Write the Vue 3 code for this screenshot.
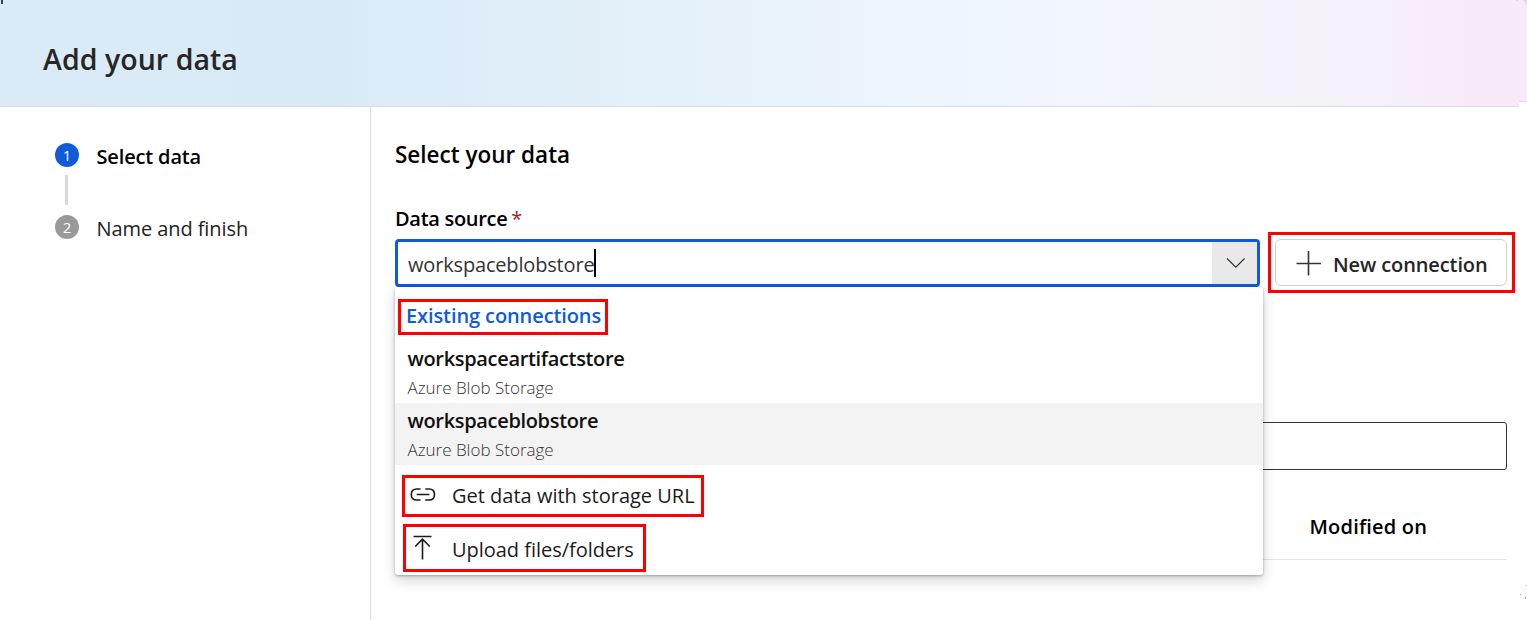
<script setup>
const steps = [
  { number: 1, label: 'Select data', active: true },
  { number: 2, label: 'Name and finish', active: false },
]
const connections = [
  { name: 'workspaceartifactstore', type: 'Azure Blob Storage', selected: false },
  { name: 'workspaceblobstore', type: 'Azure Blob Storage', selected: true },
]
</script>

<template>
  <div class="dialog">
    <header class="header">
      <h1 class="title">Add your data</h1>
      <i class="mark"></i>
      <svg class="corner" width="14" height="8" viewBox="0 0 14 8"><path d="M10 0h4v6Q12.500 2 10 0zM3 0h2v1H3z" fill="#cfdde9" /></svg>
      <i class="notch"></i>
    </header>
    <div class="body">
      <nav class="sidebar">
        <div v-for="step in steps" :key="step.number" class="step" :class="{ active: step.active }">
          <span class="badge">{{ step.number }}</span>
          <span class="step-label">{{ step.label }}</span>
        </div>
      </nav>
      <main class="main">
        <h2 class="heading">Select your data</h2>
        <label class="label">Data source <span class="required">*</span></label>
        <div class="source-row">
          <div class="combo">
            <div class="combo-value"><span>workspaceblobstore</span><i class="caret"></i></div>
            <div class="combo-toggle">
              <svg width="20" height="12" viewBox="0 0 20 12" fill="none" stroke="#333" stroke-width="1.2"><path d="M1 1.5 9.8 10.2 18.6 1.5" /></svg>
            </div>
            <div class="dropdown">
              <div class="group marked">Existing connections</div>
              <div v-for="c in connections" :key="c.name" class="option" :class="{ selected: c.selected }">
                <div class="option-name">{{ c.name }}</div>
                <div class="option-type">{{ c.type }}</div>
              </div>
              <div class="action url marked">
                <svg width="26" height="14" viewBox="0 0 26 14" fill="none" stroke="#1b1b1b" stroke-width="1.6" stroke-linecap="round"><path d="M10 1H6.800Q1.300 1 1.300 6.500T6.800 12H10M15.800 1H19Q24.500 1 24.500 6.500T19 12H15.800M7.300 6.500h11.500" /></svg>
                <span>Get data with storage URL</span>
              </div>
              <div class="action upload marked">
                <svg width="20" height="26" viewBox="0 0 20 26" fill="none" stroke="#1b1b1b" stroke-width="1.6"><path d="M1.500 2.500h18M10.500 25.500V5M3.200 12.500 10.500 5.200l7.300 7.300" /></svg>
                <span>Upload files/folders</span>
              </div>
            </div>
          </div>
          <div class="new-frame marked">
            <button class="new-button">
              <svg width="25" height="25" viewBox="0 0 25 25" stroke="#333" stroke-width="1.6"><path d="M12.500 0v24.500M0.500 12.500h24.500" /></svg>
              <span>New connection</span>
            </button>
          </div>
        </div>
        <div class="search"></div>
        <div class="table-head">Modified on</div>
        <svg class="specks" width="8" height="16" viewBox="0 0 8 16"><path d="M6 0h1v1H6zM0 9h1v1H0zM5 12h1v2H5z" fill="#aaa" /></svg>
      </main>
    </div>
  </div>
</template>

<style>
body { background: #fff; overflow: hidden; }
</style>

<style scoped>
.dialog, .dialog * { box-sizing: border-box; }
.dialog {
  display: flex;
  flex-direction: column;
  width: 1527px;
  height: 620px;
  font-family: "Open Sans", "Noto Sans", sans-serif;
  font-size: 20px;
  color: #1b1b1b;
  white-space: nowrap;
}
h1, h2 { margin: 0; font-weight: 600; }
svg { display: block; flex: none; }
.header {
  position: relative;
  height: 107px;
  flex: none;
  padding: 39px 0 0 43px;
  border-bottom: 1px solid #dcdce0;
  background: linear-gradient(90deg, #daeaf7 0, #d9eaf7 340px, #e5f1fa 680px, #f0f6fe 1000px, #f4f5fb 1180px, #f5f0f9 1380px, #f8eaf6 1480px, #f8eaf6 100%);
}
.title { font-size: 28.5px; line-height: 40px; letter-spacing: 0.05px; color: #262626; }
.mark { position: absolute; left: 1px; top: 0; width: 2px; height: 4px; background: #35415a; }
.corner { position: absolute; right: 0; top: 0; }
.notch { position: absolute; right: 0; top: 101px; width: 8px; height: 6px; border-top: 1px solid #dcdce0; background: #fff; }
.body { display: flex; flex: 1; }
.sidebar {
  display: flex;
  flex-direction: column;
  width: 371px;
  padding: 36px 0 0 55px;
  border-right: 1px solid #dcdce0;
}
.step { display: flex; align-items: flex-start; gap: 17.5px; height: 72px; }
.step .step-label { line-height: 28px; color: #222; letter-spacing: -0.08px; }
.step.active .step-label { font-weight: 600; color: #000; letter-spacing: -0.15px; }
.badge {
  position: relative;
  width: 24px;
  height: 24px;
  border-radius: 50%;
  background: #999;
  color: #fff;
  font-size: 15px;
  line-height: 24px;
  text-align: center;
}
.active .badge { background: #0f5bd8; }
.active .badge::after { content: ""; position: absolute; left: 10px; top: 32px; width: 3px; height: 30px; background: #d8d8d8; }
.main { position: relative; flex: 1; display: flex; flex-direction: column; padding: 34px 0 0 24px; }
.heading { font-size: 22.5px; line-height: 28px; color: #000; }
.label { margin-top: 36px; height: 27px; line-height: 28px; font-weight: 600; letter-spacing: -0.3px; color: #000; }
.required { margin-left: -1px; color: #a4262c; font-weight: 400; }
.source-row { display: flex; gap: 8px; height: 61px; }
.combo { position: relative; display: flex; width: 865px; height: 48px; margin-top: 7px; border: 3px solid #0f5bd8; border-radius: 4px; }
.combo-value { display: flex; align-items: center; flex: 1; padding: 3px 0 0 10px; letter-spacing: -0.17px; color: #333; }
.caret { width: 2px; height: 28px; margin: -4px 0 0 -1px; background: #000; }
.combo-toggle { display: flex; align-items: center; justify-content: center; width: 45px; padding-left: 2px; background: #e9e9e9; }
.dropdown {
  position: absolute;
  z-index: 2;
  left: -3px;
  top: 45px;
  width: 868px;
  height: 288px;
  padding-top: 12px;
  background: #fff;
  border-radius: 0 3px 3px 3px;
  box-shadow: 0 6px 14px rgba(0, 0, 0, 0.16), 0 1px 3px rgba(0, 0, 0, 0.3);
}
.marked { border: 3px solid #f00; }
.group { width: 210px; height: 36px; margin-left: 3px; padding-left: 5px; line-height: 28px; font-weight: 600; letter-spacing: -0.1px; color: #0f5bd8; }
.option { height: 62px; padding: 3px 0 0 12.5px; }
.group + .option { margin-top: 6px; }
.option.selected { background: #f3f3f3; }
.option-name { height: 30px; line-height: 30px; font-weight: 600; letter-spacing: -0.33px; color: #111; }
.option-type { height: 28px; line-height: 28px; font-size: 17px; font-weight: 300; letter-spacing: 0; color: #333; }
.action { display: flex; align-items: center; }
.url { width: 302px; height: 42px; margin: 10px 0 0 7px; padding-left: 5px; gap: 16px; }
.url svg { margin-top: -3px; }
.url span { margin-top: -1px; }
.upload { width: 243px; height: 48px; margin: 7px 0 0 8px; padding-left: 6px; gap: 20px; letter-spacing: -0.03px; }
.upload svg { margin-top: -3px; }
.upload span { margin-top: 2px; }
.new-frame { width: 247px; height: 61px; padding: 4px; }
.new-button {
  display: flex;
  align-items: center;
  gap: 12px;
  width: 232px;
  height: 47px;
  padding: 0 0 0 20px;
  border: 1px solid #cfcfcf;
  border-radius: 6px;
  background: #fff;
  font: 600 20px "Open Sans", "Noto Sans", sans-serif;
  letter-spacing: -0.11px;
  color: #262626;
}
.new-button svg { margin-top: 1px; }
.new-button span { margin-top: 3px; }
.search { width: 1112px; height: 48px; margin-top: 129px; border: 1px solid #333; border-radius: 3px; }
.table-head { width: 1112px; height: 90px; padding: 43px 0 0 914.5px; border-bottom: 1px solid #e3e3e3; line-height: 28px; font-weight: 600; letter-spacing: 0.18px; color: #000; }
.specks { position: absolute; left: 1149px; top: 478px; }
</style>
